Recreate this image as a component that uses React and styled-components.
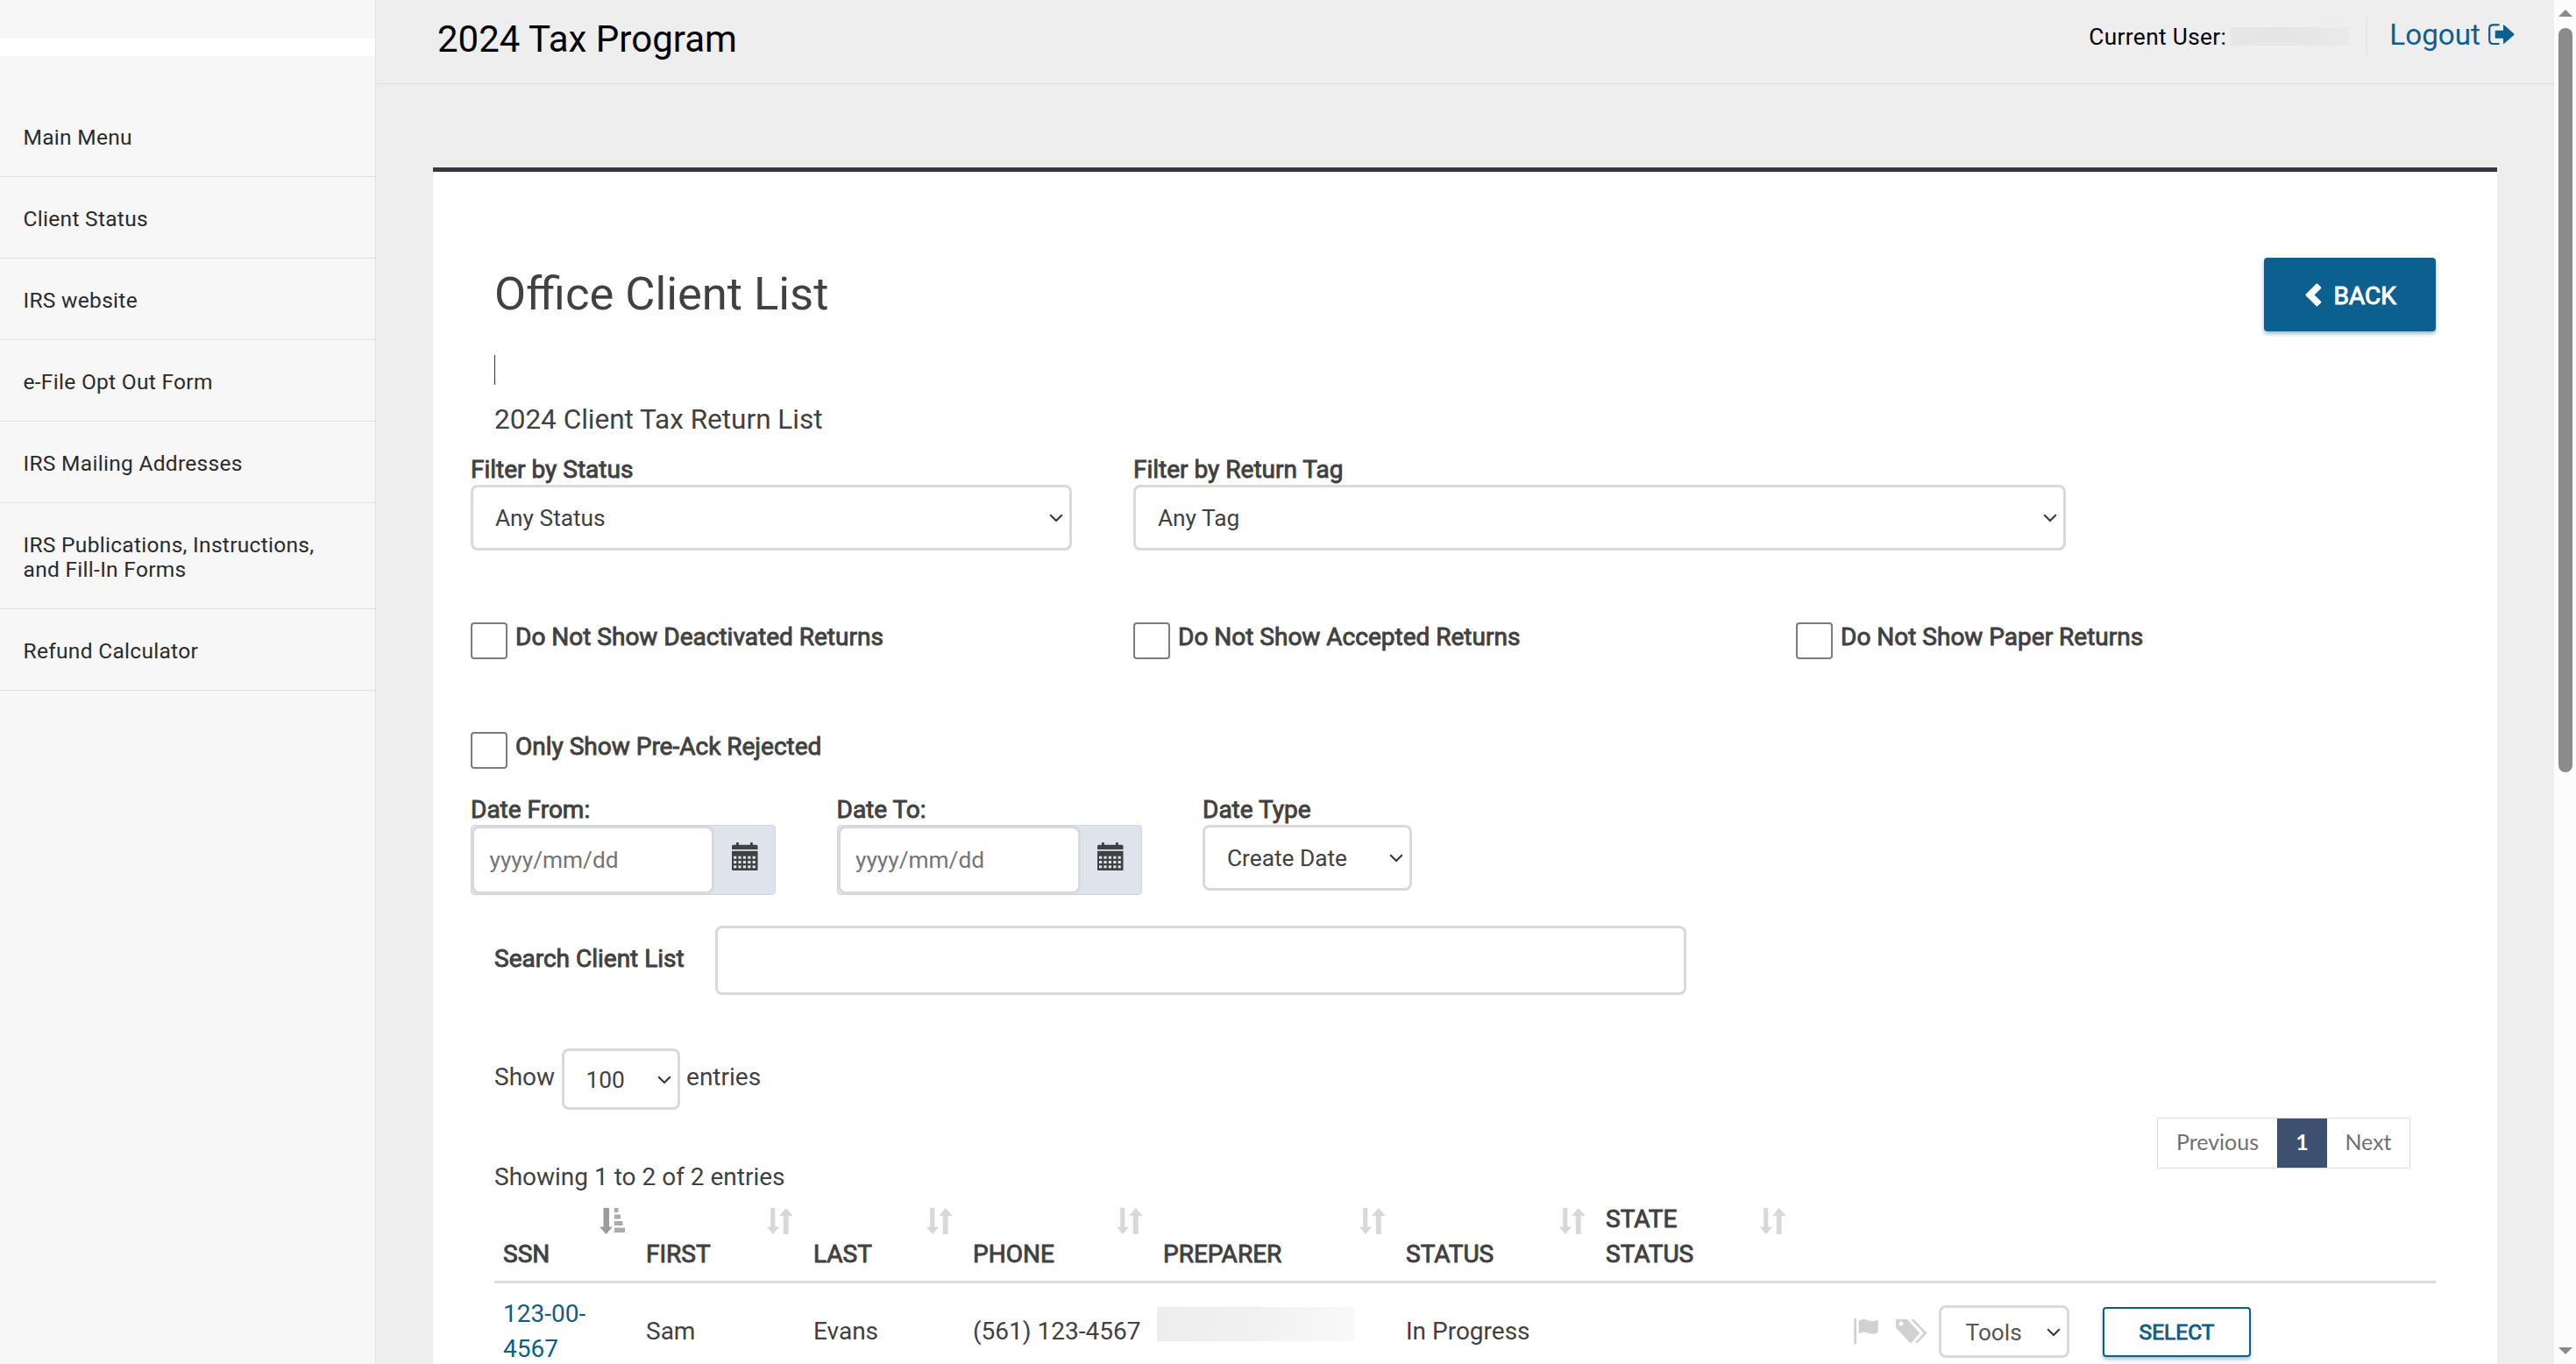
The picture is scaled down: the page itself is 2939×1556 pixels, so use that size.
import React from "react";
import styled, { createGlobalStyle } from "styled-components";

const menuItems = [
  "Main Menu",
  "Client Status",
  "IRS website",
  "e-File Opt Out Form",
  "IRS Mailing Addresses",
  "IRS Publications, Instructions, and Fill-In Forms",
  "Refund Calculator",
];

const columns = [
  { title: "SSN", sorted: true },
  { title: "FIRST" },
  { title: "LAST" },
  { title: "PHONE" },
  { title: "PREPARER" },
  { title: "STATUS" },
  { title: "STATE STATUS" },
];

const Chevron = () => (
  <svg width="16" height="10" viewBox="0 0 16 10">
    <path
      d="M1.2 1.2 8 8 14.8 1.2"
      fill="none"
      stroke="#3a3a3a"
      strokeWidth="2.2"
    />
  </svg>
);

const LogoutIcon = () => (
  <svg width="30" height="25" viewBox="0 0 30 25">
    <path
      d="M12.5 1.4H5.5Q1.2 1.4 1.2 5.7V18.8Q1.2 23 5.5 23H12.5"
      fill="none"
      stroke="#0c608f"
      strokeWidth="2.2"
    />
    <path
      d="M8.5 7.7H17V2.4Q17 .6 18.3 1.8L29.2 11.4Q30 12.2 29.2 13L18.3 22.6Q17 23.8 17 22V16.7H8.5Q7.7 16.7 7.7 15.9V8.5Q7.7 7.7 8.5 7.7Z"
      fill="#0c608f"
    />
  </svg>
);

const BackIcon = () => (
  <svg width="19" height="27" viewBox="0 0 19 27">
    <path
      d="M12.6.8Q13.5 0 14.3.8L18 4.4Q18.8 5.2 18 6L10.6 13.4 18 20.8Q18.8 21.6 18 22.4L14.3 26Q13.5 26.8 12.6 26L.8 14.2Q0 13.4.8 12.6Z"
      fill="#fff"
    />
  </svg>
);

const CalendarIcon = () => (
  <svg width="30" height="32" viewBox="0 0 30 32">
    <path
      d="M5 0H7.8V2.7H21V0H23.8V2.7H28Q29.5 2.7 29.5 4.2V8H0V4.2Q0 2.7 1.5 2.7H5ZM0 9.8H29.5V31Q29.5 32 28.5 32H1Q0 32 0 31Z"
      fill="#3f4143"
    />
    {[15.7, 21, 26.3].map((y) =>
      [2, 7.4, 12.8, 18.2, 23.6].map((x) => (
        <rect key={`${x}-${y}`} x={x} y={y} width="3.2" height="3" fill="#dfe3ec" />
      ))
    )}
  </svg>
);

const SortIcon = () => (
  <svg width="30" height="30" viewBox="0 0 30 30" fill="#d8d8d8">
    <path d="M4.2 0H9.3V21.5H14.2L7 30 0 21.5H4.2Z" />
    <path d="M18.8 30H24.6V9H29.8L21.8 0 14.2 9H18.8Z" />
  </svg>
);

const SortedIcon = () => (
  <svg width="30" height="30" viewBox="0 0 30 30" fill="#9b9b9b">
    <path d="M4.5 0H11V21.5H15L7.5 30 0 21.5H4.5Z" />
    <path
      d="M16.8 0H21.5V5H16.8ZM16.8 7.6H24V12.4H16.8ZM16.8 15H26.5V20H16.8ZM16.8 22.6H29V28H16.8Z"
      fill="#ababab"
    />
  </svg>
);

const FlagIcon = () => (
  <svg width="28" height="30" viewBox="0 0 28 30" fill="#d0d1d3">
    <rect x="0.3" width="2.7" height="29.5" rx="0.5" />
    <path d="M5.7 2.8C9 .4 13 .9 16.5 2.2S24 3.6 27.7 1.6V15.8C24 18.2 20 18.2 16.5 16.8S9 15.4 5.7 17.8Z" />
  </svg>
);

const TagsIcon = () => (
  <svg width="36" height="28" viewBox="0 0 36 28" fill="#d0d1d3">
    <path
      fillRule="evenodd"
      d="M1 0H13L27.3 15.7 17 27.7 0 9.7V1Q0 0 1 0ZM6 2.6A2.4 2.4 0 1 0 6 7.4 2.4 2.4 0 1 0 6 2.6Z"
    />
    <path d="M17 0H20.3L35.5 15.7 24.3 27.6 22.6 25.7 31.9 15.7Z" />
  </svg>
);

const Select = ({ children, ...rest }) => (
  <SelectBox role="button" {...rest}>
    {children}
    <Chevron />
  </SelectBox>
);

const CheckOption = ({ children }) => (
  <Check>
    <CheckBox />
    <Label>{children}</Label>
  </Check>
);

const DateField = ({ label }) => (
  <div>
    <Label>{label}</Label>
    <DateGroup>
      <DateInput>yyyy/mm/dd</DateInput>
      <DateAddon>
        <CalendarIcon />
      </DateAddon>
    </DateGroup>
  </div>
);

export default function App() {
  return (
    <Page>
      <GlobalStyle />
      <Sidebar>
        <Brand />
        <Menu>
          {menuItems.map((item) => (
            <MenuItem key={item}>{item}</MenuItem>
          ))}
        </Menu>
      </Sidebar>

      <Main>
        <Header>
          <ProgramTitle>2024 Tax Program</ProgramTitle>
          <UserArea>
            <UserLabel>Current User:</UserLabel>
            <UserName />
            <Divider />
            <Logout>
              Logout
              <LogoutIcon />
            </Logout>
          </UserArea>
        </Header>

        <Card>
          <CardHeader>
            <Title>Office Client List</Title>
            <BackButton>
              <BackIcon />
              BACK
            </BackButton>
          </CardHeader>
          <Caret />
          <SubTitle>2024 Client Tax Return List</SubTitle>

          <Filters>
            <div>
              <Label>Filter by Status</Label>
              <Select $width={686}>Any Status</Select>
            </div>
            <div>
              <Label>Filter by Return Tag</Label>
              <Select $width={1064}>Any Tag</Select>
            </div>
          </Filters>
          <Checks $top={82}>
            <CheckOption>Do Not Show Deactivated Returns</CheckOption>
            <CheckOption>Do Not Show Accepted Returns</CheckOption>
            <CheckOption>Do Not Show Paper Returns</CheckOption>
          </Checks>
          <Checks $top={83}>
            <CheckOption>Only Show Pre-Ack Rejected</CheckOption>
          </Checks>
          <Dates>
            <DateField label="Date From:" />
            <DateField label="Date To:" />
            <div>
              <Label>Date Type</Label>
              <Select $width={239}>Create Date</Select>
            </div>
          </Dates>

          <SearchRow>
            <Label>Search Client List</Label>
            <SearchInput />
          </SearchRow>

          <LengthRow>
            <Text>Show</Text>
            <Select $width={135} $height={70} $drop={2}>
              100
            </Select>
            <Text>entries</Text>
          </LengthRow>
          <Pagination>
            <PageLink $width={136}>Previous</PageLink>
            <PageLink $width={57} $active>
              1
            </PageLink>
            <PageLink $width={94}>Next</PageLink>
          </Pagination>
          <Info>Showing 1 to 2 of 2 entries</Info>

          <Table>
            <HeadRow>
              {columns.map(({ title, sorted }) => (
                <HeadCell key={title}>
                  <span>{title}</span>
                  {sorted ? <SortedIcon /> : <SortIcon />}
                </HeadCell>
              ))}
            </HeadRow>
            <Row>
              <Cell $link>123-00-4567</Cell>
              <Cell>Sam</Cell>
              <Cell>Evans</Cell>
              <Cell>(561) 123-4567</Cell>
              <Preparer />
              <Cell>In Progress</Cell>
              <Cell />
              <Actions>
                <FlagIcon />
                <TagsIcon />
                <Select $width={149} $height={60} $drop={2}>
                  Tools
                </Select>
                <SelectButton>SELECT</SelectButton>
              </Actions>
            </Row>
          </Table>
        </Card>
      </Main>

      <ScrollBar>
        <ScrollArrow />
        <ScrollThumb />
        <ScrollArrow $down />
      </ScrollBar>
    </Page>
  );
}

const GlobalStyle = createGlobalStyle`
  * {
    box-sizing: border-box;
  }
  body {
    margin: 0;
    font-family: Roboto, "Liberation Sans", sans-serif;
    font-size: 28px;
    line-height: 32px;
    color: #414141;
  }
  svg {
    display: block;
    flex: none;
  }
`;

const Page = styled.div`
  display: flex;
  height: 1556px;
  overflow: hidden;
  background: #eeeeee;
`;

const Sidebar = styled.aside`
  width: 429px;
  flex: none;
  background: #f7f7f7;
  border-right: 1px solid #e0e0e0;
`;

const Brand = styled.div`
  height: 64px;
  border-bottom: 20px solid #fff;
`;

const Menu = styled.ul`
  list-style: none;
  margin: 45px 0 0;
  padding: 0;
`;

const MenuItem = styled.li`
  padding: 33px 50px 30px 26.5px;
  border-top: 1px solid #fafafa;
  border-bottom: 1px solid #dedede;
  font-size: 24.5px;
  line-height: 28px;
  letter-spacing: 0.3px;
  color: #2b2b2b;
`;

const Main = styled.main`
  flex: 1;
  min-width: 0;
`;

const Header = styled.header`
  display: flex;
  justify-content: space-between;
  height: 96px;
  padding: 0 45px 0 70px;
  border-bottom: 1px solid #dedede;
`;

const ProgramTitle = styled.div`
  padding-top: 20px;
  font-size: 42px;
  line-height: 50px;
  color: #000;
`;

const UserArea = styled.div`
  display: flex;
  align-items: flex-start;
  padding-top: 19px;
`;

const UserLabel = styled.div`
  padding-top: 7px;
  font-size: 26.25px;
  letter-spacing: 0.35px;
  color: #000;
`;

const UserName = styled.div`
  width: 135px;
  height: 21px;
  margin: 12px 19px 0 5px;
  background: linear-gradient(90deg, #e6e6e6, #e4e5e4 50%, #eaeaea);
`;

const Divider = styled.div`
  width: 2px;
  height: 44px;
  background: #e6e6e6;
`;

const Logout = styled.a`
  display: flex;
  gap: 9px;
  padding: 1px 0 0 25px;
  font-size: 33.25px;
  line-height: 40px;
  color: #0c608f;

  svg {
    margin-top: 7px;
  }
`;

const Card = styled.section`
  height: 1500px;
  margin: 95px 65px 0;
  padding: 98px 70px 0 70px;
  background: #fff;
  border-top: 5px solid #343a40;
`;

const CardHeader = styled.div`
  display: flex;
  justify-content: space-between;
  height: 84px;
`;

const Title = styled.h1`
  margin: 9px 0 0;
  font-size: 52.5px;
  font-weight: 400;
  line-height: 64px;
`;

/* The labels are regular weight thickened with a stroke, so they keep
   the regular advance widths. */
const Label = styled.div`
  -webkit-text-stroke: 0.9px currentColor;
`;

const BackButton = styled.button`
  display: flex;
  align-items: center;
  gap: 13.5px;
  width: 196px;
  height: 84px;
  padding: 4px 0 0 47px;
  border: 0;
  border-radius: 4px;
  background: #0c608f;
  box-shadow: 0 3px 4px rgba(12, 96, 143, 0.4);
  font: inherit;
  color: #fff;
  -webkit-text-stroke: 1px currentColor;

  svg {
    margin-top: -4px;
  }
`;

const Caret = styled.div`
  width: 1px;
  height: 34px;
  margin: 27px 0 0;
  background: #333;
`;

const SubTitle = styled.h4`
  margin: 20px 0 21px;
  font-size: 31.5px;
  font-weight: 400;
  line-height: 40px;
`;

const Filters = styled.div`
  display: grid;
  grid-template-columns: 756px 1fr;
  margin-left: -27px;

  ${Label} {
    margin-bottom: 1px;
  }
`;

const SelectBox = styled.div`
  display: flex;
  align-items: center;
  justify-content: space-between;
  width: ${(p) => p.$width}px;
  height: ${(p) => p.$height || 75}px;
  padding: ${(p) => p.$drop || 0}px 7px 0 25px;
  border: 3px solid #d7d9de;
  border-radius: 8px;
  background: #fff;
  font-size: 26.25px;
`;

const Checks = styled.div`
  display: grid;
  grid-template-columns: repeat(3, 756px);
  margin: ${(p) => p.$top}px 0 0 -27px;
`;

const Check = styled.label`
  display: flex;
  gap: 9px;
  height: 42px;

  ${Label} {
    margin-top: 1px;
  }
`;

const CheckBox = styled.span`
  width: 42px;
  height: 42px;
  border: 2px solid #7c7c7c;
  border-radius: 4px;
  background: #fff;
`;

const Dates = styled.div`
  display: flex;
  gap: 69.5px;
  margin: 31px 0 0 -27px;

  ${Label} {
    margin-bottom: 1px;
  }
`;

const DateGroup = styled.div`
  display: flex;
  width: 348px;
  height: 80px;
  border: 1px solid #d2d6de;
  border-radius: 4px;
  background: #dfe3ec;
`;

const DateInput = styled.div`
  display: flex;
  align-items: center;
  width: 277px;
  padding-left: 17.5px;
  border: 3px solid #d7d9de;
  border-radius: 9px;
  background: #fff;
  font-size: 26.25px;
  color: #757575;
`;

const DateAddon = styled.div`
  display: flex;
  flex: 1;
  align-items: center;
  justify-content: center;
  padding-bottom: 8px;
`;

const SearchRow = styled.div`
  display: flex;
  align-items: center;
  justify-content: space-between;
  width: 1360px;
  margin-top: 35px;

  ${Label} {
    padding-bottom: 4px;
  }
`;

const SearchInput = styled.div`
  width: 1108px;
  height: 79px;
  border: 3px solid #d7d9de;
  border-radius: 8px;
`;

const Text = styled.span`
  padding-bottom: 5px;
`;

const LengthRow = styled.div`
  display: flex;
  align-items: center;
  gap: 7.5px;
  margin-top: 61px;
`;

const Pagination = styled.nav`
  display: flex;
  width: 289px;
  height: 58px;
  margin: 9px 29px 0 auto;
  border: 1px solid #d9dde2;
`;

const PageLink = styled.a`
  display: flex;
  align-items: center;
  justify-content: center;
  width: ${(p) => p.$width}px;
  padding-bottom: 4px;
  font-family: Lato, "Open Sans", sans-serif;
  font-size: 25px;
  font-weight: ${(p) => (p.$active ? 700 : 400)};
  background: ${(p) => (p.$active ? "#3d5070" : "#fff")};
  color: ${(p) => (p.$active ? "#fff" : "#707070")};
`;

const Info = styled.div`
  margin-top: -6px;
`;

const Table = styled.div`
  margin-top: 2px;
  line-height: 40px;
`;

const HeadRow = styled.div`
  display: grid;
  grid-template-columns: 163px 191px 182px 217px 277px 228px 229px 1fr;
  height: 103px;
  border-bottom: 3px solid #dddddd;
`;

const HeadCell = styled.div`
  display: flex;
  align-items: flex-end;
  justify-content: space-between;
  padding: 10px 13px 10px 10px;
  -webkit-text-stroke: 0.9px currentColor;

  svg {
    align-self: flex-start;
    margin-top: 7px;
  }
`;

const Row = styled(HeadRow)`
  height: auto;
  padding-top: 15px;
  align-items: center;
`;

const Cell = styled.div`
  padding: 0 ${(p) => (p.$link ? 50 : 0)}px 0 10px;
  color: ${(p) => (p.$link ? "#0f5d83" : "inherit")};
`;

const Preparer = styled.div`
  width: 225px;
  height: 39px;
  margin: 0 0 17px 3px;
  background: linear-gradient(100deg, #ededed, #f1f1f1 50%, #f9f9f9);
`;

const Actions = styled.div`
  display: flex;
  align-items: center;
  padding-left: 64px;

  ${SelectBox} {
    margin: 0 38px 0 13px;
    padding-left: 27.5px;
    color: #555;
  }

  svg + svg {
    margin-left: 20px;
  }
`;

const SelectButton = styled.button`
  width: 169px;
  height: 57px;
  padding: 2px 0 0;
  border: 2px solid #0f5d83;
  border-radius: 4px;
  background: #fff;
  box-shadow: 0 3px 4px rgba(12, 96, 143, 0.35);
  font: inherit;
  font-size: 24.5px;
  color: #0f5d83;
  -webkit-text-stroke: 0.9px currentColor;
`;

const ScrollBar = styled.div`
  display: flex;
  flex-direction: column;
  align-items: center;
  width: 25px;
  flex: none;
  padding: 11px 0;
  background: #fcfcfc;
`;

const ScrollArrow = styled.div`
  margin-top: ${(p) => (p.$down ? "auto" : 0)};
  border: 8px solid transparent;
  border-width: ${(p) => (p.$down ? "8px 8px 0" : "0 8px 8px")};
  border-color: ${(p) =>
    p.$down ? "#8b8b8b transparent transparent" : "transparent transparent #8b8b8b"};
`;

const ScrollThumb = styled.div`
  width: 16px;
  height: 849px;
  margin-top: 13px;
  border-radius: 8px;
  background: #8b8b8b;
`;
